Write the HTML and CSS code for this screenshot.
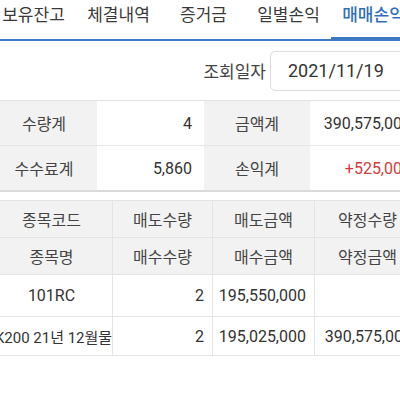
FILE: index.html
```html
<!DOCTYPE html>
<html lang="ko">
<head>
<meta charset="utf-8">
<link rel="stylesheet" href="styles.css">
</head>
<body>
<div class="page">
  <nav class="tabs">
    <div class="tab">보유잔고</div>
    <div class="tab">체결내역</div>
    <div class="tab">증거금</div>
    <div class="tab">일별손익</div>
    <div class="tab active">매매손익</div>
  </nav>

  <div class="date-row">
    <span class="date-label">조회일자</span>
    <div class="date-input">2021/11/19</div>
  </div>

  <div class="summary">
    <div class="s-cell s-label">수량계</div>
    <div class="s-cell s-value">4</div>
    <div class="s-cell s-label">금액계</div>
    <div class="s-cell s-value">390,575,000</div>
    <div class="s-cell s-label last">수수료계</div>
    <div class="s-cell s-value last">5,860</div>
    <div class="s-cell s-label last">손익계</div>
    <div class="s-cell s-value last red">+525,000</div>
  </div>

  <div class="grid">
    <div class="g-cell g-head">종목코드</div>
    <div class="g-cell g-head">매도수량</div>
    <div class="g-cell g-head">매도금액</div>
    <div class="g-cell g-head">약정수량</div>
    <div class="g-cell g-head">종목명</div>
    <div class="g-cell g-head">매수수량</div>
    <div class="g-cell g-head">매수금액</div>
    <div class="g-cell g-head">약정금액</div>

    <div class="g-cell g-data center r1">101RC</div>
    <div class="g-cell g-data num r1">2</div>
    <div class="g-cell g-data num r1">195,550,000</div>
    <div class="g-cell g-data num r1">4</div>
    <div class="g-cell g-data center name r2">K200 21년 12월물</div>
    <div class="g-cell g-data num r2">2</div>
    <div class="g-cell g-data num r2">195,025,000</div>
    <div class="g-cell g-data num r2">390,575,000</div>
  </div>
</div>
</body>
</html>
```

FILE: styles.css
```css
html, body {
  margin: 0;
  padding: 0;
  overflow: hidden;
  background: #ffffff;
}

body {
  width: 400px;
  height: 400px;
  font-family: Roboto, "Noto Sans CJK KR", sans-serif;
  color: #333333;
}

.page {
  margin-left: -9px;
  width: 440px;
}

/* Tabs */
.tabs {
  display: flex;
  border-bottom: 2px solid #3d79c2;
  height: 39px;
}

.tab {
  width: 85px;
  flex: 0 0 85px;
  box-sizing: border-box;
  padding-top: 2px;
  line-height: 24px;
  text-align: center;
  font-size: 17px;
  color: #3a3a3a;
  font-family: "Noto Sans CJK KR", sans-serif;
}

.tab.active {
  color: #2f6fbf;
  font-weight: 500;
  box-shadow: inset 0 -2px 0 #3d79c2;
}

/* Date row */
.date-row {
  display: flex;
  justify-content: flex-end;
  align-items: center;
  height: 59px;
  margin-right: 1px;
}

.date-label {
  font-family: "Noto Sans CJK KR", sans-serif;
  font-size: 17px;
  color: #444444;
  margin-right: 4px;
  margin-top: -1px;
}

.date-input {
  box-sizing: border-box;
  width: 160px;
  height: 40px;
  border: 1px solid #dcdcdc;
  border-radius: 5px;
  padding-left: 17px;
  display: flex;
  align-items: center;
  font-size: 18px;
  color: #333333;
}

/* Summary */
.summary {
  display: grid;
  grid-template-columns: 106px 107px 106px 113px;
  border-top: 1px solid #e2e2e2;
}

.s-cell {
  height: 44px;
  display: flex;
  align-items: center;
  font-size: 16px;
  border-bottom: 1px solid #e6e6e6;
}

.s-cell.last {
  border-bottom: 2px solid #dadada;
}

.s-label {
  background: #f2f2f2;
  justify-content: center;
  font-family: "Noto Sans CJK KR", sans-serif;
  font-size: 16px;
  color: #444444;
}

.s-value {
  justify-content: flex-end;
  padding-right: 12px;
  color: #333333;
}

.s-value.red {
  color: #d23a3a;
}

/* Detail grid */
.grid {
  display: grid;
  grid-template-columns: 122px 100px 102px 106px;
  margin-top: 8px;
  border-top: 1px solid #e4e4e4;
}

.g-cell {
  display: flex;
  align-items: center;
  box-sizing: border-box;
  border-right: 1px solid #e4e4e4;
  border-bottom: 1px solid #e4e4e4;
  font-size: 16px;
}

.g-head {
  height: 37px;
  background: #f2f2f2;
  justify-content: center;
  font-family: "Noto Sans CJK KR", sans-serif;
  font-size: 16px;
  color: #444444;
}

.g-data {
  color: #333333;
}

.g-data.r1 {
  height: 42px;
}

.g-data.r2 {
  height: 39px;
}

.g-data.center {
  justify-content: center;
}

.g-data.name {
  font-size: 15px;
  white-space: nowrap;
  padding-left: 4px;
}

.g-data.num {
  justify-content: flex-end;
  padding-right: 8px;
}
```
